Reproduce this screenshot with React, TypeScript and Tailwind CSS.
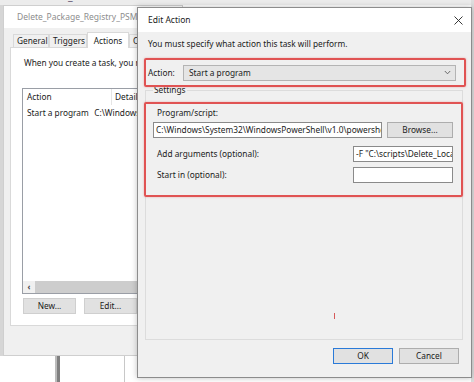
function ClockIcon() {
  return (
    <svg width="9" height="9" viewBox="0 0 9 9" fill="none" stroke="#8a8a8a" strokeWidth="1">
      <circle cx="4.5" cy="4.5" r="3.8" />
      <path d="M4.5 2.2v2.5h1.8" />
    </svg>
  );
}

function Chevron() {
  return (
    <svg width="7" height="5" viewBox="0 0 7 5" fill="none" stroke="#5a5a5a" strokeWidth="0.9">
      <polyline points="0.8,1 3.5,3.8 6.2,1" />
    </svg>
  );
}

function CloseX() {
  return (
    <svg width="9" height="9" viewBox="0 0 9 9" fill="none" stroke="#222" strokeWidth="0.9">
      <path d="M0.5 0.5l8 8M8.5 0.5l-8 8" />
    </svg>
  );
}

function WinButton({ label, primary }: { label: string; primary?: boolean }) {
  return (
    <div
      className={`w-[60px] h-[16px] flex items-center justify-center bg-[#e1e1e1] border ${
        primary ? "border-[#2a7ad8]" : "border-[#adadad]"
      }`}
    >
      {label}
    </div>
  );
}

function TaskWindow() {
  const tabs = [
    { name: "General", w: "w-[36px]" },
    { name: "Triggers", w: "w-[38px]" },
    { name: "Actions", w: "w-[42px]", active: true },
    { name: "Conditions", w: "w-[52px]" },
  ];

  return (
    <div className="absolute left-[3px] top-[5px] w-[180px] h-[351px] flex flex-col border border-[#cfcfcf] bg-[#f0f0f0]">
      <div className="h-[22px] shrink-0 bg-white flex items-center gap-[4px] pl-[9px] text-[8.5px] text-[#8d8d8d] whitespace-nowrap">
        <ClockIcon />
        <span>Delete_Package_Registry_PSM1 Properties</span>
      </div>

      {/* tabs */}
      <div className="h-[19px] shrink-0 flex items-end pl-[9px]">
        {tabs.map((t) =>
          t.active ? (
            <div
              key={t.name}
              className={`${t.w} h-[16px] -mb-[1px] relative z-10 bg-white border border-b-0 border-[#d9d9d9] flex items-center justify-center`}
            >
              {t.name}
            </div>
          ) : (
            <div
              key={t.name}
              className={`${t.w} h-[13px] border border-b-0 border-[#d9d9d9] flex items-center pl-[3px] whitespace-nowrap overflow-hidden`}
            >
              {t.name}
            </div>
          )
        )}
      </div>

      {/* tab panel */}
      <div className="ml-[6px] h-[279px] bg-white border border-[#d9d9d9] flex flex-col pl-[11px] pt-[9px]">
        <p className="pl-[2px] whitespace-nowrap">
          When you create a task, you must specify the action that will occur when your task starts.
        </p>

        <div className="mt-[19px] w-[160px] h-[206px] border border-[#9a9ea6] flex flex-col">
          <div className="h-[16px] flex items-center">
            <div className="w-[89px] h-full pl-[4px] flex items-center border-r border-[#e5e5e5]">Action</div>
            <div className="pl-[3px]">Details</div>
          </div>
          <div className="h-[16px] flex items-center">
            <div className="w-[90px] pl-[4px]">Start a program</div>
            <div className="pl-[3px] whitespace-nowrap">C:\Windows\System32</div>
          </div>
          <div className="flex-1" />
          <div className="h-[12px] flex items-center bg-[#f0f0f0]">
            <div className="w-[12px] flex items-center justify-center text-[8px] font-bold text-[#444]">‹</div>
            <div className="flex-1 h-full bg-[#cdcdcd]" />
          </div>
        </div>

        <div className="flex gap-[8px] mt-[4px] ml-[1px]">
          <div className="w-[53px] h-[16px] flex items-center justify-center bg-[#e1e1e1] border border-[#cfcfcf]">New...</div>
          <div className="w-[53px] h-[16px] flex items-center justify-center bg-[#e1e1e1] border border-[#cfcfcf]">Edit...</div>
        </div>
      </div>
    </div>
  );
}

function EditActionDialog() {
  return (
    <div className="absolute left-[137px] top-[7px] w-[335px] h-[371px] flex flex-col border border-[#8c8c8c] bg-[#f0f0f0] shadow-[0_0_6px_rgba(0,0,0,0.25)]">
      <div className="h-[24px] shrink-0 bg-white flex items-center justify-between pl-[10px] pr-[8px] text-[8.5px]">
        <span>Edit Action</span>
        <CloseX />
      </div>

      <div className="flex-1 flex flex-col pl-[6px] pr-[5px]">
        <p className="mt-[6px] pl-[4px]">You must specify what action this task will perform.</p>

        <div className="relative z-10 mt-[8px] h-[29px] border-2 border-[#e05353] rounded-[2px] shadow-[0_0_2px_rgba(224,83,83,0.5)] flex items-center pl-[2px] pr-[8px]">
          <span className="w-[35px]">Action:</span>
          <div className="flex-1 h-[16px] bg-[#e5e5e5] border border-[#b4b4b4] flex items-center justify-between pl-[5px] pr-[4px]">
            <span>Start a program</span>
            <Chevron />
          </div>
        </div>

        <fieldset className="relative -mt-[3px] ml-[1px] mr-[3px] h-[256px] border border-[#dcdcdc]">
          <legend className="ml-[7px] px-[1px]">Settings</legend>

          <div className="mt-[6px] -ml-[2px] -mr-[1px] h-[95px] border-2 border-[#e05353] rounded-[2px] shadow-[0_0_2px_rgba(224,83,83,0.5)] flex flex-col pl-[7px] pr-[8px] pt-[3px]">
            <span className="pl-[4px]">Program/script:</span>
            <div className="flex gap-[5px] mt-[3px]">
              <div className="w-[229px] h-[16px] bg-white border border-[#8a8a8a] px-[2px] overflow-hidden whitespace-nowrap leading-[14px]">
                C:\Windows\System32\WindowsPowerShell\v1.0\powershell.exe
              </div>
              <div className="flex-1 h-[16px] flex items-center justify-center bg-[#e1e1e1] border border-[#adadad]">
                Browse...
              </div>
            </div>
            <div className="flex items-center justify-between mt-[8px]">
              <span className="pl-[4px]">Add arguments (optional):</span>
              <div className="w-[100px] h-[16px] bg-white border border-[#8a8a8a] px-[2px] overflow-hidden whitespace-nowrap leading-[14px]">
                -F "C:\scripts\Delete_LocalPackages.ps1"
              </div>
            </div>
            <div className="flex items-center justify-between mt-[5px]">
              <span className="pl-[4px]">Start in (optional):</span>
              <div className="w-[100px] h-[16px] bg-white border border-[#8a8a8a]" />
            </div>
          </div>

          {/* stray annotation mark */}
          <div className="absolute left-[188px] top-[217px] w-[1px] h-[6px] bg-[#d65a5a]" />
        </fieldset>

        <div className="flex justify-end gap-[6px] mt-[8px] pr-[7px]">
          <WinButton label="OK" primary />
          <WinButton label="Cancel" />
        </div>
      </div>
    </div>
  );
}

export default function App() {
  return (
    <div className="relative w-[474px] h-[382px] overflow-hidden bg-white font-['Noto_Sans',sans-serif] text-[8.3px] leading-[12px] text-[#1b1b1b]">
      {/* strip of the window behind, top */}
      <div className="absolute left-0 top-0 w-[474px] h-[5px] bg-[#ececec] overflow-hidden">
        <div className="-mt-[10px] pl-[2px] text-[11px] font-semibold text-[#5a4a6a] whitespace-nowrap">
          Lichtenstein_Tasks
        </div>
      </div>
      <div className="absolute left-0 top-[5px] w-[3px] h-[351px] bg-[#d6d6d6]" />

      {/* window edges below */}
      <div className="absolute left-[55px] top-[356px] w-[2px] h-[26px] bg-[#bcbcbc]" />
      <div className="absolute left-[57px] top-[356px] w-[3px] h-[26px] bg-[#808080]" />
      <div className="absolute left-[124px] top-[356px] w-[1px] h-[26px] bg-[#c8c8c8]" />
      <div className="absolute left-[471px] top-0 w-[3px] h-[382px] bg-[#dedede]" />

      <TaskWindow />
      <EditActionDialog />
    </div>
  );
}
